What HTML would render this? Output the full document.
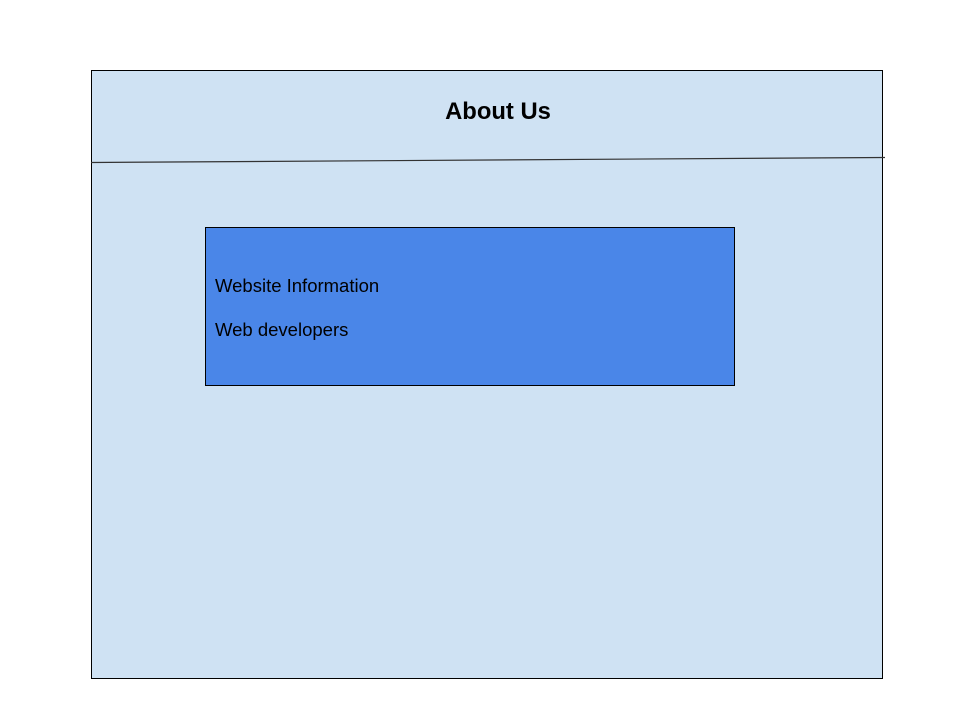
<!DOCTYPE html>
<html><head><style>
body{margin:0;width:960px;height:720px;background:#fff;position:relative;overflow:hidden;font-family:"Liberation Sans",Arial,sans-serif}
.outer{position:absolute;left:91px;top:70px;width:790px;height:607px;border:1px solid #000;background:#cfe2f3}
.inner{position:absolute;left:205px;top:227px;width:528px;height:157px;border:1px solid #000;background:#4a86e8}
.t{position:absolute;color:#000;white-space:nowrap}
</style></head><body>
<div class="outer"></div>
<svg style="position:absolute;left:0;top:0" width="960" height="720"><line x1="91" y1="162.5" x2="885" y2="157.5" stroke="#333" stroke-width="1.2"/></svg>
<div class="t" style="left:0;width:996px;text-align:center;top:98px;font-size:23.8px;font-weight:bold">About Us</div>
<div class="inner"></div>
<div class="t" style="left:215px;top:275px;font-size:18.5px">Website Information</div>
<div class="t" style="left:215px;top:319px;font-size:18.5px">Web developers</div>
</body></html>
